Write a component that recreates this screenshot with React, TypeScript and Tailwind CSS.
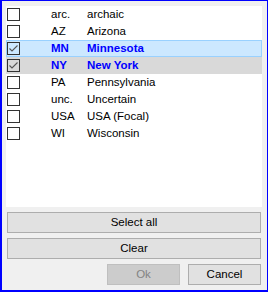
const rows = [
  { code: "arc.", name: "archaic", checked: false, state: "" },
  { code: "AZ", name: "Arizona", checked: false, state: "" },
  { code: "MN", name: "Minnesota", checked: true, state: "selected" },
  { code: "NY", name: "New York", checked: true, state: "hot" },
  { code: "PA", name: "Pennsylvania", checked: false, state: "" },
  { code: "unc.", name: "Uncertain", checked: false, state: "" },
  { code: "USA", name: "USA (Focal)", checked: false, state: "" },
  { code: "WI", name: "Wisconsin", checked: false, state: "" },
];

function CheckBox({ checked }: { checked: boolean }) {
  return (
    <div className="w-[13px] h-[13px] border border-[#333333] shrink-0 flex items-center justify-center">
      {checked && (
        <svg width="11" height="11" viewBox="0 0 11 11">
          <polyline points="1.5,5.5 4,8 9.5,2.5" fill="none" stroke="#555555" strokeWidth="1.1" />
        </svg>
      )}
    </div>
  );
}

export default function App() {
  return (
    <div
      className="w-[268px] h-[292px] bg-[#f0f0f0] border-[#0000ff] border-t border-r border-l-2 border-b-2 pt-[5px] pl-[4px] pr-[5px] pb-[5px] flex flex-col text-[11.5px] text-black"
      style={{ fontFamily: '"Liberation Sans", Arial, sans-serif' }}
    >
      {/* list */}
      <div className="h-[201px] bg-white flex flex-col shrink-0">
        {rows.map((r) => (
          <div
            key={r.code}
            className={
              "h-[17px] flex items-center pl-[1px] border " +
              (r.state === "selected"
                ? "bg-[#cce8ff] border-[#99d1ff]"
                : r.state === "hot"
                ? "bg-[#d9d9d9] border-[#d9d9d9]"
                : "border-transparent")
            }
          >
            <div className="-ml-px">
              <CheckBox checked={r.checked} />
            </div>
            <span className={"ml-[31px] w-[36px] whitespace-nowrap " + (r.checked ? "font-bold text-[#0000ff]" : "")}>
              {r.code}
            </span>
            <span className={"whitespace-nowrap " + (r.checked ? "font-bold text-[#0000ff]" : "")}>{r.name}</span>
          </div>
        ))}
      </div>

      <div className="flex flex-col gap-[5px] mt-[5px] px-px">
        <button className="h-[21px] bg-[#e1e1e1] border border-[#adadad] text-black">Select all</button>
        <button className="h-[21px] bg-[#e1e1e1] border border-[#adadad] text-black">Clear</button>
        <div className="flex justify-end gap-[8px]">
          <button className="h-[21px] w-[73px] bg-[#cccccc] border border-[#bfbfbf] text-[#838383]">Ok</button>
          <button className="h-[21px] w-[73px] bg-[#e1e1e1] border border-[#adadad] text-black">Cancel</button>
        </div>
      </div>
    </div>
  );
}
